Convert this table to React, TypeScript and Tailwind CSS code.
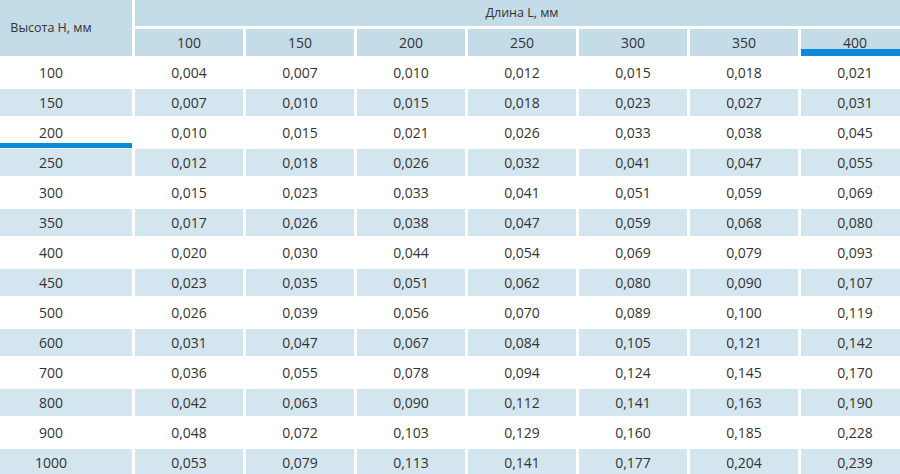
const LENGTHS = [100, 150, 200, 250, 300, 350, 400];

const ROWS: [number, string[]][] = [
  [100, ["0,004", "0,007", "0,010", "0,012", "0,015", "0,018", "0,021"]],
  [150, ["0,007", "0,010", "0,015", "0,018", "0,023", "0,027", "0,031"]],
  [200, ["0,010", "0,015", "0,021", "0,026", "0,033", "0,038", "0,045"]],
  [250, ["0,012", "0,018", "0,026", "0,032", "0,041", "0,047", "0,055"]],
  [300, ["0,015", "0,023", "0,033", "0,041", "0,051", "0,059", "0,069"]],
  [350, ["0,017", "0,026", "0,038", "0,047", "0,059", "0,068", "0,080"]],
  [400, ["0,020", "0,030", "0,044", "0,054", "0,069", "0,079", "0,093"]],
  [450, ["0,023", "0,035", "0,051", "0,062", "0,080", "0,090", "0,107"]],
  [500, ["0,026", "0,039", "0,056", "0,070", "0,089", "0,100", "0,119"]],
  [600, ["0,031", "0,047", "0,067", "0,084", "0,105", "0,121", "0,142"]],
  [700, ["0,036", "0,055", "0,078", "0,094", "0,124", "0,145", "0,170"]],
  [800, ["0,042", "0,063", "0,090", "0,112", "0,141", "0,163", "0,190"]],
  [900, ["0,048", "0,072", "0,103", "0,129", "0,160", "0,185", "0,228"]],
  [1000, ["0,053", "0,079", "0,113", "0,141", "0,177", "0,204", "0,239"]],
];

export default function App() {
  return (
    <div
      className="w-[900px] h-[474px] overflow-hidden bg-white text-[#333] text-[14px]"
      style={{ fontFamily: '"Open Sans", "Noto Sans", sans-serif' }}
    >
      <div className="grid w-[909px] grid-cols-[132px_repeat(7,108px)] grid-rows-[26px_27px] auto-rows-[27px] gap-[3px]">
        {/* Header */}
        <div className="row-span-2 flex items-center justify-center pr-[30px] bg-[#c4dbe8] text-[12.5px]">
          Высота H, мм
        </div>
        <div className="col-span-7 flex items-center justify-center bg-[#c4dbe8] text-[12.5px]">
          Длина L, мм
        </div>
        {LENGTHS.map((l) => (
          <div key={l} className="relative flex items-center justify-center bg-[#c4dbe8]">
            {l}
            {l === 400 && <div className="absolute left-0 right-0 bottom-0 h-[7px] bg-[#0a8ad8]" />}
          </div>
        ))}

        {/* Body */}
        {ROWS.map(([h, vals], i) => {
          const bg = i % 2 === 1 ? "bg-[#d3e5ef]" : "bg-white";
          return [
            <div key={`h${h}`} className={`relative flex items-center justify-center pr-[30px] ${bg}`}>
              {h}
              {h === 200 && <div className="absolute left-0 right-0 bottom-[-2px] h-[5px] bg-[#0a8ad8]" />}
            </div>,
            ...vals.map((v, j) => (
              <div key={`${h}-${j}`} className={`flex items-center justify-center ${bg}`}>
                {v}
              </div>
            )),
          ];
        })}
      </div>
    </div>
  );
}
